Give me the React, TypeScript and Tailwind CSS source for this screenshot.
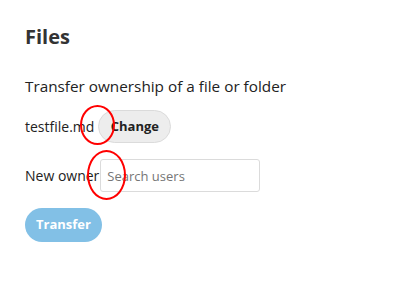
const App = () => {
  return (
    <div className="relative w-[417px] h-[282px] bg-white text-[#222] px-[25px] pt-[22px]" style={{ fontFamily: '"Open Sans", sans-serif' }}>
      <h2 className="text-[20px] font-bold leading-[30px] text-[#333]">Files</h2>
      <p className="mt-[22px] text-[15.3px] leading-[24px] text-[#222]">Transfer ownership of a file or folder</p>
      <div className="mt-[12px] flex items-center h-[33px]">
        <span className="text-[14px]">testfile.md</span>
        <button className="ml-[4px] h-[33px] w-[73px] rounded-full bg-[#ededed] border border-[#dbdbdb] text-[13px] font-bold text-[#222]">
          Change
        </button>
      </div>
      <div className="mt-[16px] flex items-center h-[33px]">
        <span className="text-[14px]">New owner</span>
        <input
          className="ml-[1px] h-[33px] w-[160px] rounded-[3px] border border-[#dbdbdb] px-[6px] text-[13px] placeholder:text-[#767676] outline-none"
          placeholder="Search users"
        />
      </div>
      <button className="mt-[16px] h-[34px] w-[77px] rounded-full bg-[#82c0e6] text-[13px] font-bold text-white">
        Transfer
      </button>

      <div className="absolute left-[80px] top-[105px] w-[35px] h-[40px] rounded-[50%] border-2 border-[#f00]" />
      <div className="absolute left-[87px] top-[150px] w-[39px] h-[50px] rounded-[50%] border-2 border-[#f00]" />
    </div>
  )
}

export default App
